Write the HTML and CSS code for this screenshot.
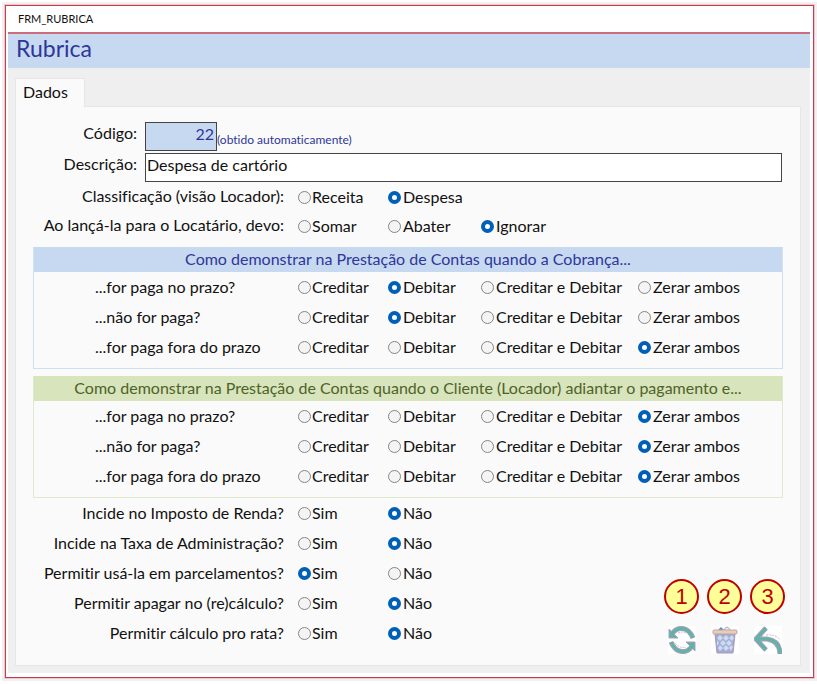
FILE: index.html
```html
<!DOCTYPE html>
<html lang="pt-BR">
<head>
<meta charset="utf-8">
<title>FRM_RUBRICA</title>
<link rel="stylesheet" href="styles.css">
</head>
<body>
<main class="window">
  <div class="titlebar">FRM_RUBRICA</div>
  <h1 class="heading">Rubrica</h1>
  <div class="body">
    <div class="tabs" role="tablist"><button class="tab" type="button" role="tab" aria-selected="true">Dados</button></div>
    <form class="page">
      <div class="fields">
        <div class="field">
          <label class="field-label" for="codigo">Código:</label>
          <input class="box code" id="codigo" value="22" readonly>
          <span class="hint">(obtido automaticamente)</span>
        </div>
        <div class="field">
          <label class="field-label" for="descricao">Descrição:</label>
          <input class="box" id="descricao" value="Despesa de cartório">
        </div>
      </div>
      <div class="rows compact">
        <div class="row" role="radiogroup" aria-labelledby="q1">
          <span class="question" id="q1">Classificação (visão Locador):</span>
          <label class="option"><input type="radio" name="q1">Receita</label>
          <label class="option"><input type="radio" name="q1" checked>Despesa</label>
        </div>
        <div class="row" role="radiogroup" aria-labelledby="q2">
          <span class="question" id="q2">Ao lançá-la para o Locatário, devo:</span>
          <label class="option"><input type="radio" name="q2">Somar</label>
          <label class="option"><input type="radio" name="q2">Abater</label>
          <label class="option"><input type="radio" name="q2" checked>Ignorar</label>
        </div>
      </div>

      <section class="panel blue">
        <h2 class="panel-title">Como demonstrar na Prestação de Contas quando a Cobrança...</h2>
        <div class="row" role="radiogroup" aria-labelledby="a1">
          <span class="question" id="a1">...for paga no prazo?</span>
          <label class="option"><input type="radio" name="a1">Creditar</label>
          <label class="option"><input type="radio" name="a1" checked>Debitar</label>
          <label class="option"><input type="radio" name="a1">Creditar e Debitar</label>
          <label class="option"><input type="radio" name="a1">Zerar ambos</label>
        </div>
        <div class="row" role="radiogroup" aria-labelledby="a2">
          <span class="question" id="a2">...não for paga?</span>
          <label class="option"><input type="radio" name="a2">Creditar</label>
          <label class="option"><input type="radio" name="a2" checked>Debitar</label>
          <label class="option"><input type="radio" name="a2">Creditar e Debitar</label>
          <label class="option"><input type="radio" name="a2">Zerar ambos</label>
        </div>
        <div class="row" role="radiogroup" aria-labelledby="a3">
          <span class="question" id="a3">...for paga fora do prazo</span>
          <label class="option"><input type="radio" name="a3">Creditar</label>
          <label class="option"><input type="radio" name="a3">Debitar</label>
          <label class="option"><input type="radio" name="a3">Creditar e Debitar</label>
          <label class="option"><input type="radio" name="a3" checked>Zerar ambos</label>
        </div>
      </section>

      <section class="panel green">
        <h2 class="panel-title">Como demonstrar na Prestação de Contas quando o Cliente (Locador) adiantar o pagamento e...</h2>
        <div class="row" role="radiogroup" aria-labelledby="b1">
          <span class="question" id="b1">...for paga no prazo?</span>
          <label class="option"><input type="radio" name="b1">Creditar</label>
          <label class="option"><input type="radio" name="b1">Debitar</label>
          <label class="option"><input type="radio" name="b1">Creditar e Debitar</label>
          <label class="option"><input type="radio" name="b1" checked>Zerar ambos</label>
        </div>
        <div class="row" role="radiogroup" aria-labelledby="b2">
          <span class="question" id="b2">...não for paga?</span>
          <label class="option"><input type="radio" name="b2">Creditar</label>
          <label class="option"><input type="radio" name="b2">Debitar</label>
          <label class="option"><input type="radio" name="b2">Creditar e Debitar</label>
          <label class="option"><input type="radio" name="b2" checked>Zerar ambos</label>
        </div>
        <div class="row" role="radiogroup" aria-labelledby="b3">
          <span class="question" id="b3">...for paga fora do prazo</span>
          <label class="option"><input type="radio" name="b3">Creditar</label>
          <label class="option"><input type="radio" name="b3">Debitar</label>
          <label class="option"><input type="radio" name="b3">Creditar e Debitar</label>
          <label class="option"><input type="radio" name="b3" checked>Zerar ambos</label>
        </div>
      </section>

      <div class="bottom">
        <div class="rows">
          <div class="row" role="radiogroup" aria-labelledby="c1">
            <span class="question" id="c1">Incide no Imposto de Renda?</span>
            <label class="option"><input type="radio" name="c1">Sim</label>
            <label class="option"><input type="radio" name="c1" checked>Não</label>
          </div>
          <div class="row" role="radiogroup" aria-labelledby="c2">
            <span class="question" id="c2">Incide na Taxa de Administração?</span>
            <label class="option"><input type="radio" name="c2">Sim</label>
            <label class="option"><input type="radio" name="c2" checked>Não</label>
          </div>
          <div class="row" role="radiogroup" aria-labelledby="c3">
            <span class="question" id="c3">Permitir usá-la em parcelamentos?</span>
            <label class="option"><input type="radio" name="c3" checked>Sim</label>
            <label class="option"><input type="radio" name="c3">Não</label>
          </div>
          <div class="row" role="radiogroup" aria-labelledby="c4">
            <span class="question" id="c4">Permitir apagar no (re)cálculo?</span>
            <label class="option"><input type="radio" name="c4">Sim</label>
            <label class="option"><input type="radio" name="c4" checked>Não</label>
          </div>
          <div class="row" role="radiogroup" aria-labelledby="c5">
            <span class="question" id="c5">Permitir cálculo pro rata?</span>
            <label class="option"><input type="radio" name="c5">Sim</label>
            <label class="option"><input type="radio" name="c5" checked>Não</label>
          </div>
        </div>
        <div class="actions">
          <div class="action">
            <span class="badge">1</span>
            <button class="tool" type="button" aria-label="Atualizar">
              <svg viewBox="0 0 28 28" width="28" height="28" fill="none">
                <g stroke="#aaa0bd" stroke-width="5"><path d="M4 8C9 0 20 0 25 12"/><path d="M24 20C19 28 8 28 3 16"/></g>
                <path d="M1 3V12H10ZM27 25V16H18Z" fill="#62b3a4" stroke="#aaa0bd"/>
                <g stroke="#62b3a4" stroke-width="3"><path d="M4 8C9 0 20 0 25 12"/><path d="M24 20C19 28 8 28 3 16"/></g>
                <path d="M10 7Q14 5 18 7M7 17Q12 23 18 21" stroke="#c9bfd6" stroke-dasharray="2 1"/>
              </svg>
            </button>
          </div>
          <div class="action">
            <span class="badge">2</span>
            <button class="tool" type="button" aria-label="Excluir">
              <svg viewBox="0 0 28 28" width="28" height="28" fill="none">
                <path d="M7 4L10 1L13 4Z" fill="#5f8fd0"/><path d="M13 4Q16-2 19 4" fill="#eee" stroke="#b0a2bf"/>
                <path d="M4 8H24L22 27H6Z" fill="#a3acd3" stroke="#a897be"/>
                <g fill="#cbdcf1"><path d="M9 9L12 12L9 15L6 12ZM15 9L18 12L15 15L12 12ZM21 9L23 12L21 15L18 12ZM12 14L15 17L12 20L9 17ZM18 14L21 17L18 20L15 17ZM9 19L12 22L9 25L7 22ZM15 19L18 22L15 25L12 22ZM20 19L22 21L20 25L18 22ZM6 14L8 17L6 20Z"/></g>
                <rect x="2" y="4" width="24" height="4" rx="1" fill="#e8ceb4" stroke="#bda5a6"/>
              </svg>
            </button>
          </div>
          <div class="action">
            <span class="badge">3</span>
            <button class="tool" type="button" aria-label="Voltar">
              <svg viewBox="0 0 28 28" width="28" height="28" fill="none" stroke-linejoin="round">
                <g stroke="#aaa0bd" stroke-width="5"><path d="M12 2L2 13L12 24M2 13H13Q26 15 26 28"/></g>
                <g stroke="#62b3a4" stroke-width="3"><path d="M12 2L2 13L12 24M2 13H13Q26 15 26 28"/></g>
                <path d="M12 9Q22 8 26 14" stroke="#c9bfd6" stroke-dasharray="2 1"/>
              </svg>
            </button>
          </div>
        </div>
      </div>
    </form>
  </div>
</main>
</body>
</html>
```
FILE: styles.css
```css
* { box-sizing: border-box; }
body {
  margin: 0;
  padding: 5px 3px 6px 5px;
  background: #fff;
  color: #111;
  font: 16px/30px Lato, sans-serif;
  font-variant-ligatures: none;
}
input, button { font: inherit; color: inherit; }
.window {
  border: 1px solid #c83a4e;
  padding: 0 3px 4px 2px;
  background: #fff;
  box-shadow: 0 0 0 1px #e9c8cd, 0 0 0 3px #f2f0f0;
}
.titlebar {
  height: 28px;
  padding-left: 10px;
  border-bottom: 2px solid #cc6c7c;
  font-size: 11px;
  line-height: 26px;
}
.heading {
  margin: 0;
  height: 34px;
  padding-left: 8px;
  background: #c6d9f1;
  color: #2f3699;
  font-size: 23px;
  font-weight: 400;
  line-height: 28px;
}
.body { padding: 10px 9px 7px 7px; background: #efefef; }
.tabs { display: flex; }
.tab {
  position: relative;
  height: 29px;
  margin-bottom: -1px;
  padding: 0 16px 2px 7px;
  border: 1px solid #e6e6e6;
  border-bottom: 0;
  background: #fafafa;
  line-height: 24px;
}
.page {
  margin: 0;
  padding: 15px 15px 11px 17px;
  border: 1px solid #e6e6e6;
  background: #fafafa;
}
.fields { display: grid; gap: 2px; margin-right: 3px; }
.field { display: flex; height: 29px; }
.field-label { width: 104px; margin-right: 8px; text-align: right; line-height: 22px; }
.box {
  flex: 1;
  min-width: 0;
  padding: 0 2px 5px 1px;
  border: 1px solid #444;
  background: #fff;
  line-height: 22px;
}
.code { flex: 0 0 72px; background: #c6d9f1; color: #2f3699; text-align: right; }
.hint { padding-top: 3px; color: #2f3699; font-size: 12px; }
.row {
  display: grid;
  grid-template-columns: 265px 90px 93px 157px auto;
  justify-content: start;
  height: 30px;
}
.compact .row { height: 29px; line-height: 28px; }
.question { padding-right: 14px; text-align: right; }
.option { display: flex; align-items: center; white-space: nowrap; }
.option input {
  appearance: none;
  flex: none;
  width: 13px;
  height: 13px;
  margin: 1px 2px 0 0;
  border: 1px solid #858585;
  border-radius: 50%;
  background: #f4f4f4;
}
.option input:checked { border: 4px solid #005fb8; background: #fff; }
.question + .option input { margin-right: 1px; }
.panel { margin: 7px 2px 0 0; padding-bottom: 6px; border: 1px solid; border-top: 0; }
.panel .row { grid-template-columns: 264px 90px 93px 157px auto; }
.panel .question { padding-left: 61px; text-align: left; }
.panel-title {
  margin: 0;
  height: 25px;
  font-size: 16px;
  font-weight: 400;
  line-height: 23px;
  text-align: center;
}
.blue { border-color: #d0dff2; }
.blue .panel-title { background: #c6d9f1; color: #2f3699; }
.green { border-color: #dfe9cd; }
.green .panel-title { background: #d7e4bc; color: #4f6228; }
.bottom { display: flex; justify-content: space-between; align-items: flex-end; }
.bottom .rows { padding-bottom: 6px; }
.actions { display: flex; gap: 8px; }
.action { display: flex; flex-direction: column; align-items: center; gap: 12px; }
.badge {
  width: 35px;
  height: 35px;
  border: 2px solid #c00000;
  border-radius: 50%;
  background: #ffff99;
  color: #c00000;
  font: 22px/31px "Liberation Sans", sans-serif;
  text-align: center;
}
.tool { width: 28px; height: 28px; padding: 0; border: 0; background: #fff; }
.tool svg { display: block; }
```
